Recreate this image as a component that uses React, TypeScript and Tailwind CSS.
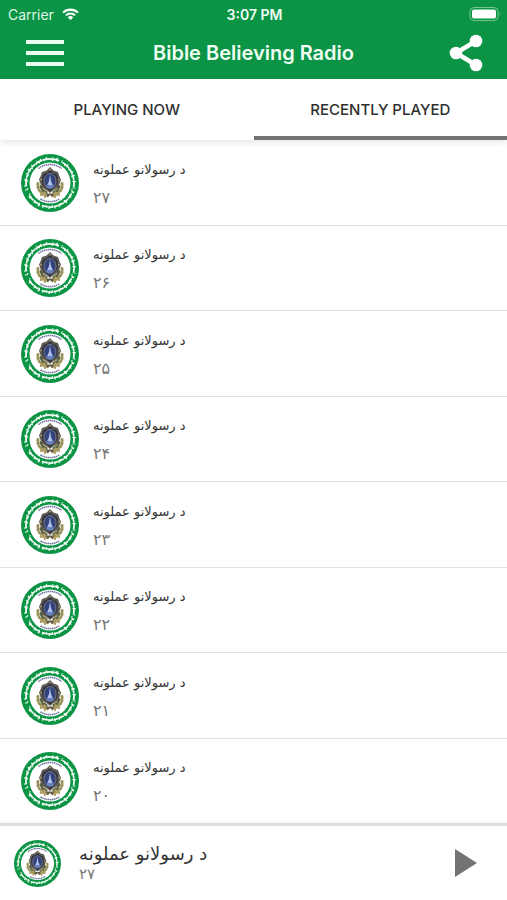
import React from "react";

const TITLE = "د رسولانو عملونه";
const EPISODES = ["۲۷", "۲۶", "۲۵", "۲۴", "۲۳", "۲۲", "۲۱", "۲۰"];

function Emblem({ className }: { className: string }) {
  return (
    <svg viewBox="0 0 116 116" className={className} aria-hidden="true">
      <circle cx="58" cy="58" r="58" fill="#0b9444" />
      {/* lettering band: word strokes, then ascenders and dots */}
      <g fill="none" stroke="#f1fbf4">
        <circle cx="58" cy="58" r="48" strokeWidth="3.500" pathLength="360" transform="rotate(-122 58 58)" strokeDasharray="14 1 9 1 12 1 16 9 11 1 9 1 15 1 13 1 16 16 15 1 12 1 14 1 11 1 12 1 15 10 12 1 16 24 18 1 11 1 14 1 12 1" />
        <circle cx="58" cy="58" r="49" strokeWidth="6" pathLength="360" transform="rotate(-122 58 58)" strokeDasharray="2 7 2.500 11 3 12 2 7 4 9 2 13 3 17" />
        <circle cx="58" cy="58" r="46" strokeWidth="3" pathLength="360" transform="rotate(-119 58 58)" strokeDasharray="3 12 2 16 4 10 2 18" />
      </g>
      <circle cx="58" cy="58" r="41" fill="#fff" />
      <path d="M35 29a37 37 0 0 1 46 0" fill="none" stroke="#6d739f" strokeWidth="3" strokeDasharray="3 1" />
      <path d="M39 90a37 37 0 0 0 38 0" fill="none" stroke="#6d739f" strokeWidth="3" strokeDasharray="3 1" />
      {/* wreath and ribbon */}
      <g fill="none" stroke="#9b9359" strokeWidth="6" strokeLinecap="round" strokeDasharray="2 5">
        <path d="M34 59c-2 11 4 20 19 22M82 59c2 11-4 20-19 22" />
        <path d="M40 65c2 8 7 11 14 12M76 65c-2 8-7 11-14 12" stroke="#55603e" />
      </g>
      <path d="M38 79l10-5 6 9-7 6-2-6-7 1zM78 79l-10-5-6 9 7 6 2-6 7 1z" fill="#aa9c63" />
      <path d="M50 79h16l-3 8-5-5-5 5z" fill="#625c46" />
      {/* shield */}
      <g transform="translate(0 3)">
        <path d="M58 23l7 7 9 3 3 9 3 6-3 9-3 9-9 3-7 6-7-6-9-3-3-9-3-9 3-6 3-9 9-3z" fill="#5f5b53" />
        <path d="M58 28l5 6 8 3 4 10-3 12-14 13-14-13-3-12 4-10 8-3z" fill="#333744" />
        <ellipse cx="58" cy="51" rx="12" ry="15" fill="#31427c" stroke="#77777f" strokeWidth="2" />
        <path d="M58 38l2 13 4 9H52l4-9z" fill="#b3c1ee" />
        <path d="M49 60h18l-4 5H53z" fill="#6482c7" />
        <g fill="#a49a70">
          <circle cx="58" cy="28" r="2" />
          <circle cx="40" cy="48" r="2" />
          <circle cx="76" cy="48" r="2" />
          <circle cx="45" cy="67" r="2" />
          <circle cx="71" cy="67" r="2" />
        </g>
      </g>
    </svg>
  );
}

function StatusBar() {
  return (
    <div className="grid h-7 grid-cols-3 items-center pr-[6px] pl-2 text-[14px] text-white">
      <div className="flex items-center gap-2 text-[#dff7e6]">
        <span>Carrier</span>
        <svg viewBox="0 0 18 13" className="h-3 w-[17px]" fill="none" stroke="#fff" strokeWidth="2.200" aria-label="Wi-Fi" role="img">
          <path d="M1 5a11.500 11.500 0 0 1 16 0M4 8a7.200 7.200 0 0 1 10 0" />
          <path d="M6 10.200a4.400 4.400 0 0 1 6 0L9 13z" fill="#fff" stroke="none" />
        </svg>
      </div>
      <span className="text-center font-semibold text-[#effff4]">3:07 PM</span>
      <svg viewBox="0 0 32 14" className="h-[14px] w-8 justify-self-end" aria-label="Battery full" role="img">
        <rect x="1" y="0.500" width="28" height="13" rx="4" fill="none" stroke="#75c591" />
        <rect x="3" y="2.500" width="24" height="9" rx="2" fill="#fff" />
        <path d="M30.500 5v4q1.500-2 0-4z" fill="#75c591" />
      </svg>
    </div>
  );
}

export default function App() {
  return (
    <div className="flex h-screen flex-col bg-white font-['Inter','DejaVu_Sans',sans-serif]">
      <header className="shrink-0 bg-[#0b9446]">
        <StatusBar />
        <div className="flex h-[51px] items-center justify-between px-6 pb-[2px]">
          <button type="button" aria-label="Menu" className="flex w-10 flex-col gap-[7px] pl-[2px]">
            <span className="h-1 w-full bg-[#eafff0]" />
            <span className="h-1 w-full bg-[#eafff0]" />
            <span className="h-1 w-full bg-[#eafff0]" />
          </button>
          <h1 className="text-[20px] font-semibold text-[#f0fff4]">Bible Believing Radio</h1>
          <button type="button" aria-label="Share" className="flex w-10 justify-end">
            <svg viewBox="0 0 34 38" className="h-[38px] w-[34px]" fill="#fff" aria-hidden="true">
              <path d="M27 7L7 19l20 12" fill="none" stroke="#fff" strokeWidth="4.500" />
              <circle cx="27" cy="7" r="6.300" />
              <circle cx="7" cy="19" r="6.300" />
              <circle cx="27" cy="31" r="6.300" />
            </svg>
          </button>
        </div>
      </header>

      <nav className="z-10 flex h-[61px] shrink-0 bg-white text-[15px] font-medium text-[#303030] shadow-[0_4px_5px_0_rgba(0,0,0,0.07)]">
        <button type="button" className="flex-1 border-b-4 border-transparent pt-[6px]">PLAYING NOW</button>
        <button type="button" aria-current="page" className="flex-1 border-b-4 border-[#737373] pt-[6px]">RECENTLY PLAYED</button>
      </nav>

      <ul className="flex min-h-0 flex-1 flex-col">
        {EPISODES.map((episode) => (
          <li key={episode} className="flex flex-1 items-center gap-[14px] border-b border-[#e2e2e2] px-[21px] pt-px">
            <Emblem className="size-[58px] shrink-0" />
            <div className="flex flex-col gap-1 pt-[2px] font-['DejaVu_Sans',sans-serif]">
              <span lang="ps" className="text-[13px] leading-6 text-[#333333]">{TITLE}</span>
              <span lang="ps" className="text-[16px] leading-6 text-[#777777]">{episode}</span>
            </div>
          </li>
        ))}
      </ul>

      <footer className="z-10 flex h-[76px] shrink-0 items-center gap-[18px] border-t-2 border-[#dfdfdf] bg-white pr-6 pl-[14px] shadow-[0_-2px_3px_0_rgba(0,0,0,0.05)]">
        <Emblem className="size-[47px] shrink-0" />
        <div className="flex flex-1 flex-col pb-[2px] font-['DejaVu_Sans',sans-serif]">
          <span lang="ps" className="text-[18px] leading-6 text-[#333333]">{TITLE}</span>
          <span lang="ps" className="text-[15px] leading-4 text-[#777777]">{EPISODES[0]}</span>
        </div>
        <button type="button" aria-label="Play" className="flex w-[34px] justify-center">
          <svg viewBox="0 0 22 28" className="h-7 w-[22px]" aria-hidden="true">
            <path d="M0 0l22 14L0 28z" fill="#737373" />
          </svg>
        </button>
      </footer>
    </div>
  );
}
